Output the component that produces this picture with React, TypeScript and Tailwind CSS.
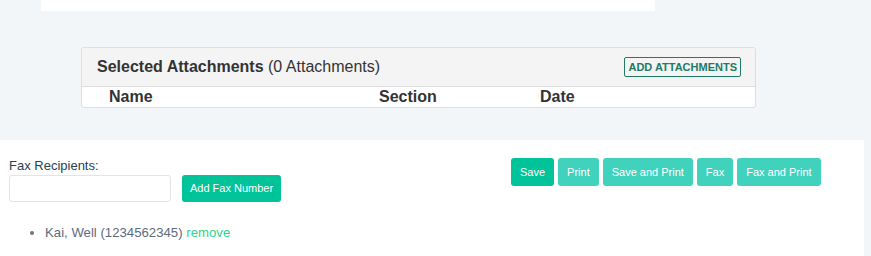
import React from 'react';

const font = { fontFamily: '"Liberation Sans", Arial, sans-serif' };

const actions = [
  { label: 'Save', primary: true },
  { label: 'Print' },
  { label: 'Save and Print' },
  { label: 'Fax' },
  { label: 'Fax and Print' },
];

export default function App() {
  return (
    <div className="w-[871px] h-[256px] bg-[#f3f6f9] overflow-hidden" style={font}>
      {/* top panel edge */}
      <div className="ml-[41px] w-[614px] h-[11px] bg-white" />

      {/* Attachments card */}
      <div className="ml-[81px] mt-[36px] w-[675px] h-[61px] bg-white border border-[#dedede] rounded-[3px] overflow-hidden">
        <div className="h-[39px] bg-[#f4f4f4] border-b border-[#dedede] flex items-center justify-between pl-[15px] pr-[14px]">
          <div className="text-[16px] text-[#333]">
            <span className="font-bold">Selected Attachments</span> (0 Attachments)
          </div>
          <button className="h-[20px] px-[3px] border border-[#1f7a66] rounded-[2px] text-[11px] font-bold text-[#1f7a66] leading-none">
            ADD ATTACHMENTS
          </button>
        </div>
        <div className="flex items-center h-[20px] pl-[27px] text-[16px] font-bold text-[#333]">
          <div className="w-[270px]">Name</div>
          <div className="w-[161px]">Section</div>
          <div>Date</div>
        </div>
      </div>

      {/* Fax panel */}
      <div className="mt-[32px] w-[864px] h-[116px] bg-white pl-[9px]">
        <div className="flex">
          <div className="w-[502px] pt-[18px]">
            <div className="text-[13px] text-[#2c3e50] leading-[15px]">Fax Recipients:</div>
            <div className="flex items-center mt-[2px]">
              <input className="w-[162px] h-[27px] border border-[#e4e4e4] rounded-[3px] outline-none" />
              <button className="ml-[11px] w-[99px] h-[27px] rounded-[3px] bg-[#00c39a] text-white text-[11px] font-medium">
                Add Fax Number
              </button>
            </div>
          </div>
          <div className="flex gap-[4px] pt-[18px]">
            {actions.map((a) => (
              <button
                key={a.label}
                className={`h-[28px] px-[9px] rounded-[3px] text-white text-[11px] font-medium ${
                  a.primary ? 'bg-[#00c39a]' : 'bg-[#40d2bc]'
                }`}
              >
                {a.label}
              </button>
            ))}
          </div>
        </div>
        <ul className="list-disc pl-[36px] mt-[21px] text-[13.2px] text-[#5c6b7e] marker:text-[#6b7785]">
          <li>
            Kai, Well (1234562345) <span className="text-[#2fd38c]">remove</span>
          </li>
        </ul>
      </div>
    </div>
  );
}
